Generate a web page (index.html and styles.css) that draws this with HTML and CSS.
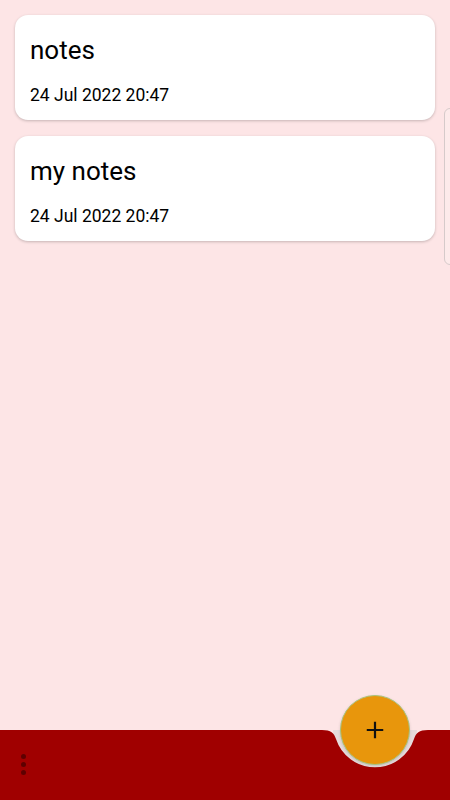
FILE: index.html
```html
<!DOCTYPE html>
<html lang="en">
<head>
    <meta charset="UTF-8">
    <meta name="viewport" content="width=device-width, initial-scale=1.0">
    <title>Notes</title>
    <link rel="stylesheet" href="styles.css">
</head>
<body>
    <div class="app">
        <main class="notes">
            <div class="note">
                <div class="note-title">notes</div>
                <div class="note-date">24 Jul 2022 20:47</div>
            </div>
            <div class="note">
                <div class="note-title">my notes</div>
                <div class="note-date">24 Jul 2022 20:47</div>
            </div>
        </main>
        <div class="side-handle"></div>
        <footer class="bottom-bar">
            <svg class="bar-bg" viewBox="0 0 450 70" width="450" height="70">
                <circle cx="375" cy="0" r="42" fill="#e6dbdb"/>
                <path d="M0 0 H322 C331 0 334 3 336 9 A41 41 0 0 0 414 9 C416 3 419 0 428 0 H450 V70 H0 Z" fill="#a00000"/>
            </svg>
            <button class="menu-btn" aria-label="menu">
                <span></span><span></span><span></span>
            </button>
            <button class="fab" aria-label="add">
                <svg viewBox="0 0 24 24" width="22" height="22">
                    <path d="M12 3 V21 M3 12 H21" stroke="#111" stroke-width="2.4" fill="none"/>
                </svg>
            </button>
        </footer>
    </div>
</body>
</html>
```

FILE: styles.css
```css
body { margin: 0; font-family: Roboto, "Noto Sans", sans-serif; background-color: #fde5e6; color: #000; }
.app { position: relative; height: 100vh; display: flex; flex-direction: column; overflow: hidden; }
.notes { flex: 1; padding: 15px; display: flex; flex-direction: column; gap: 16px; }
.note {
    background: white; border-radius: 13px; padding: 20px 15px 15px;
    box-shadow: 0 1px 3px rgba(0, 0, 0, 0.22);
}
.note-title { font-size: 26px; line-height: 30px; margin-bottom: 20px; }
.note-date { font-size: 17.5px; line-height: 20px; }
.side-handle {
    position: absolute; left: 444px; top: 108px; width: 20px; height: 155px;
    background: #fdeaea; border: 1px solid #d6caca; border-radius: 6px;
}
.bottom-bar { position: relative; height: 70px; }
.bar-bg { display: block; }
.menu-btn {
    position: absolute; left: 17px; top: 24px; width: 12px; height: 21px;
    background: none; border: none; padding: 0;
    display: flex; flex-direction: column; align-items: center; justify-content: space-between;
}
.menu-btn span { width: 5px; height: 5px; border-radius: 50%; background: #5e0000; filter: blur(0.6px); }
.fab {
    position: absolute; left: 340px; top: -35px; width: 70px; height: 70px;
    border-radius: 50%; background: #e8960c; border: 1.5px solid #a8c47c;
    display: flex; align-items: center; justify-content: center; padding: 0;
    box-shadow: 0 1px 3px rgba(0, 0, 0, 0.15);
}
```
